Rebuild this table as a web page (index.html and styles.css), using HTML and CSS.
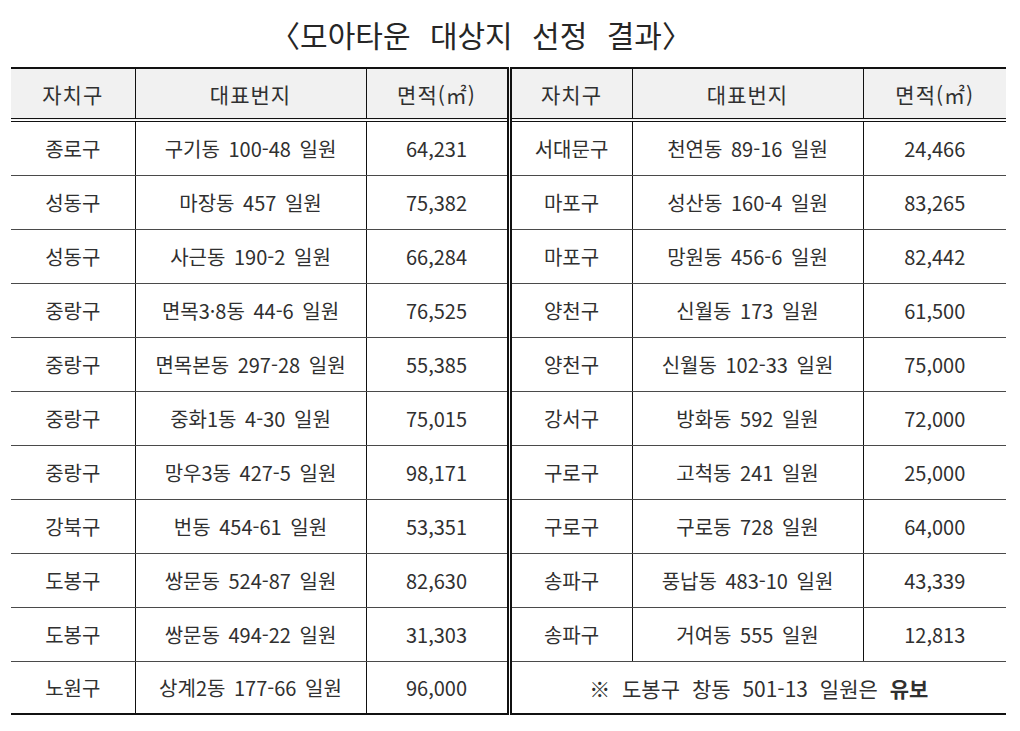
FILE: index.html
```html
<!DOCTYPE html>
<html lang="ko">
<head>
<meta charset="utf-8">
<title>모아타운 대상지 선정 결과</title>
<link rel="stylesheet" href="styles.css">
</head>
<body>
<div class="title-wrap"><h1 class="title">〈모아타운 대상지 선정 결과〉</h1></div>
<table class="result">
  <colgroup>
    <col class="c-gu"><col class="c-addr"><col class="c-area">
    <col class="c-gu2"><col class="c-addr"><col class="c-area2">
  </colgroup>
  <thead>
    <tr>
      <th>자치구</th><th>대표번지</th><th>면적(㎡)</th>
      <th class="split">자치구</th><th>대표번지</th><th>면적(㎡)</th>
    </tr>
  </thead>
  <tbody>
    <tr><td>종로구</td><td>구기동 100-48 일원</td><td>64,231</td><td class="split">서대문구</td><td>천연동 89-16 일원</td><td>24,466</td></tr>
    <tr><td>성동구</td><td>마장동 457 일원</td><td>75,382</td><td class="split">마포구</td><td>성산동 160-4 일원</td><td>83,265</td></tr>
    <tr><td>성동구</td><td>사근동 190-2 일원</td><td>66,284</td><td class="split">마포구</td><td>망원동 456-6 일원</td><td>82,442</td></tr>
    <tr><td>중랑구</td><td>면목3·8동 44-6 일원</td><td>76,525</td><td class="split">양천구</td><td>신월동 173 일원</td><td>61,500</td></tr>
    <tr><td>중랑구</td><td>면목본동 297-28 일원</td><td>55,385</td><td class="split">양천구</td><td>신월동 102-33 일원</td><td>75,000</td></tr>
    <tr><td>중랑구</td><td>중화1동 4-30 일원</td><td>75,015</td><td class="split">강서구</td><td>방화동 592 일원</td><td>72,000</td></tr>
    <tr><td>중랑구</td><td>망우3동 427-5 일원</td><td>98,171</td><td class="split">구로구</td><td>고척동 241 일원</td><td>25,000</td></tr>
    <tr><td>강북구</td><td>번동 454-61 일원</td><td>53,351</td><td class="split">구로구</td><td>구로동 728 일원</td><td>64,000</td></tr>
    <tr><td>도봉구</td><td>쌍문동 524-87 일원</td><td>82,630</td><td class="split">송파구</td><td>풍납동 483-10 일원</td><td>43,339</td></tr>
    <tr><td>도봉구</td><td>쌍문동 494-22 일원</td><td>31,303</td><td class="split">송파구</td><td>거여동 555 일원</td><td>12,813</td></tr>
    <tr class="last"><td>노원구</td><td>상계2동 177-66 일원</td><td>96,000</td><td class="split note" colspan="3">※ 도봉구 창동 501-13 일원은 <b>유보</b></td></tr>
  </tbody>
</table>
</body>
</html>
```
FILE: styles.css
```css
html, body {
  margin: 0;
  padding: 0;
  background: #fff;
}
body {
  font-family: "Noto Sans CJK KR", "Noto Sans", sans-serif;
  color: #303030;
}
.title-wrap {
  height: 67px;
  display: flex;
  align-items: center;
  justify-content: center;
  padding-right: 58px;
}
.title {
  margin: 0;
  font-size: 30px;
  font-weight: 400;
  color: #262626;
  word-spacing: 11px;
  line-height: 1;
}
.result {
  margin-left: 11px;
  width: 995px;
  border-collapse: collapse;
  table-layout: fixed;
  font-size: 20px;
}
.c-gu { width: 124px; }
.c-addr { width: 231px; }
.c-area { width: 143px; }
.c-gu2 { width: 123px; }
.c-area2 { width: 143px; }
.result th,
.result td {
  padding: 0;
  text-align: center;
  vertical-align: middle;
  border-top: 1px solid #4a4a4a;
  border-bottom: 1px solid #4a4a4a;
  border-left: 1px solid #111;
  border-right: 1px solid #111;
  white-space: nowrap;
}
.result th:first-child,
.result td:first-child { border-left: none; }
.result th:last-child,
.result td:last-child { border-right: none; }
.result thead th {
  font-weight: 400;
  font-size: 21px;
  letter-spacing: 1px;
  background: #f1f1f1;
  height: 49px;
  border-top: 2px solid #111;
  border-bottom: 4px double #111;
}
.result tbody td {
  height: 53px;
  word-spacing: 3px;
}
.result .split {
  border-left: 5px double #111;
}
.result tr.last td {
  height: 51px;
  border-bottom: 2px solid #111;
}
.result .note {
  word-spacing: 6px;
  font-size: 21px;
}
.result .note b {
  font-weight: 700;
}
```
